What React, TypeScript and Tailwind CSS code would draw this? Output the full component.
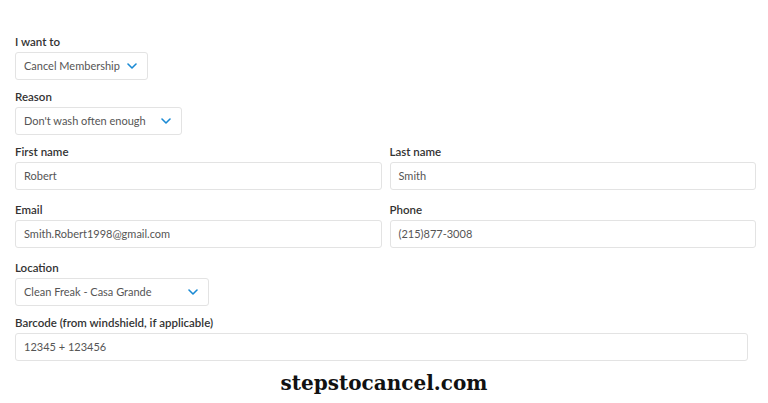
import { ReactNode } from "react";

const font = { fontFamily: 'Lato, "Noto Sans", sans-serif' };

function Label({ children }: { children: ReactNode }) {
  return (
    <div className="mb-[2px] text-[11.5px] leading-[16px] font-semibold text-[#333]">
      {children}
    </div>
  );
}

function Chevron() {
  return (
    <svg width="10" height="6" viewBox="0 0 10 6" fill="none" className="shrink-0">
      <path d="M1 1l4 4 4-4" stroke="#1a8ad4" strokeWidth="1.6" strokeLinecap="round" strokeLinejoin="round" />
    </svg>
  );
}

function Select({ value, width }: { value: string; width: string }) {
  return (
    <div
      className={`flex h-[28px] items-center justify-between rounded-[3px] border border-[#e3e3e3] bg-white pl-[8px] pr-[10px] text-[11px] text-[#555] ${width}`}
    >
      <span className="whitespace-nowrap">{value}</span>
      <Chevron />
    </div>
  );
}

function Input({ value, className = "" }: { value: string; className?: string }) {
  return (
    <div
      className={`flex h-[28px] items-center rounded-[3px] border border-[#e3e3e3] bg-white px-[8px] text-[11px] text-[#555] ${className}`}
    >
      {value}
    </div>
  );
}

export default function App() {
  return (
    <div className="relative h-[403px] w-[768px] overflow-hidden bg-white" style={font}>
      <div className="w-[756px] pl-[15px] pt-[34px]">
        {/* Action */}
        <Label>I want to</Label>
        <Select value="Cancel Membership" width="w-[133px]" />

        <div className="mt-[9px]">
          <Label>Reason</Label>
          <Select value="Don't wash often enough" width="w-[167px]" />
        </div>

        {/* Name */}
        <div className="mt-[9px] grid grid-cols-2 gap-x-[8px]">
          <div>
            <Label>First name</Label>
            <Input value="Robert" />
          </div>
          <div>
            <Label>Last name</Label>
            <Input value="Smith" />
          </div>
        </div>

        {/* Contact */}
        <div className="mt-[12px] grid grid-cols-2 gap-x-[8px]">
          <div>
            <Label>Email</Label>
            <Input value="Smith.Robert1998@gmail.com" />
          </div>
          <div>
            <Label>Phone</Label>
            <Input value="(215)877-3008" />
          </div>
        </div>

        <div className="mt-[12px]">
          <Label>Location</Label>
          <Select value="Clean Freak - Casa Grande" width="w-[194px]" />
        </div>

        <div className="mt-[9px]">
          <Label>Barcode (from windshield, if applicable)</Label>
          <Input value="12345 + 123456" className="w-[733px]" />
        </div>
      </div>

      <div
        className="mt-[7px] text-center text-[20px] font-bold text-[#111]"
        style={{ fontFamily: '"DejaVu Serif", serif' }}
      >
        stepstocancel.com
      </div>
    </div>
  );
}
